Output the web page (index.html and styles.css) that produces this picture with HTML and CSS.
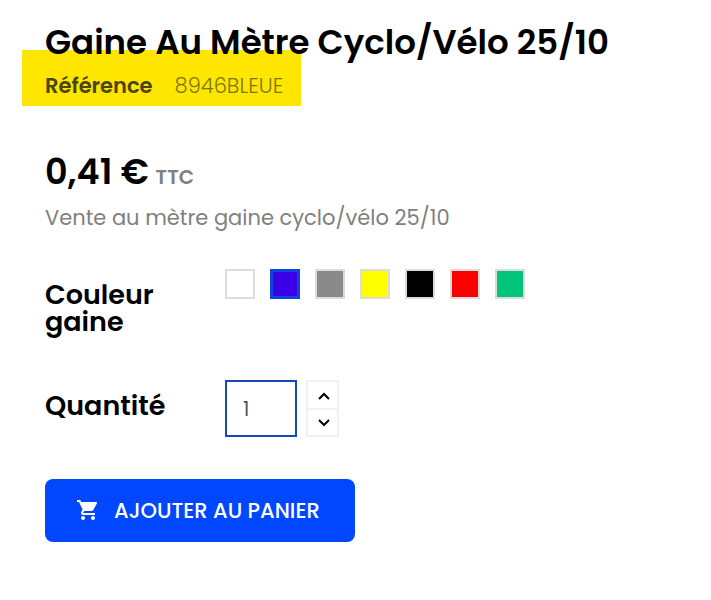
FILE: index.html
```html
<!DOCTYPE html>
<html lang="fr">
<head>
    <meta charset="UTF-8">
    <meta name="viewport" content="width=device-width, initial-scale=1.0">
    <title>Gaine Au Mètre Cyclo/Vélo 25/10</title>
    <link rel="stylesheet" href="styles.css">
</head>
<body>

    <main class="product">
        <h1 class="product-title">Gaine Au Mètre Cyclo/Vélo 25/10</h1>
        <p class="reference"><strong>Référence</strong><span>8946BLEUE</span></p>

        <p class="price"><span>0,41 €</span><small>TTC</small></p>
        <p class="description">Vente au mètre gaine cyclo/vélo 25/10</p>

        <form id="addToCart" method="post" autocomplete="off">
            <div class="row" role="radiogroup" aria-labelledby="colorLabel">
                <span class="row-label" id="colorLabel">Couleur gaine</span>
                <div class="swatches">
                    <input type="radio" name="color" class="swatch white" value="blanc" aria-label="Blanc">
                    <input type="radio" name="color" class="swatch blue" value="bleu" aria-label="Bleu" checked>
                    <input type="radio" name="color" class="swatch grey" value="gris" aria-label="Gris">
                    <input type="radio" name="color" class="swatch yellow" value="jaune" aria-label="Jaune">
                    <input type="radio" name="color" class="swatch black" value="noir" aria-label="Noir">
                    <input type="radio" name="color" class="swatch red" value="rouge" aria-label="Rouge">
                    <input type="radio" name="color" class="swatch green" value="vert" aria-label="Vert">
                </div>
            </div>

            <div class="row">
                <label class="row-label" for="qty">Quantité</label>
                <div class="quantity">
                    <input type="text" id="qty" name="qty" inputmode="numeric" value="1">
                    <div class="stepper">
                        <button type="button" aria-label="Augmenter">
                            <svg width="14" height="8" viewBox="0 0 14 8"><path d="M3 8L8 3L13 8"/></svg>
                        </button>
                        <button type="button" aria-label="Diminuer">
                            <svg width="14" height="8" viewBox="0 0 14 8"><path d="M3 2L8 7L13 2"/></svg>
                        </button>
                    </div>
                </div>
            </div>

            <button type="submit" class="add-to-cart">
                <svg width="24" height="24" viewBox="0 1 24 24" aria-hidden="true"><path d="M7 18c-1.100 0-1.990.9-1.990 2S5.900 22 7 22s2-.9 2-2-.9-2-2-2zM1 2v2h2l3.600 7.590-1.350 2.450c-.160.280-.250.610-.250.960 0 1.100.9 2 2 2h12v-2H7.420c-.140 0-.250-.110-.250-.250l.030-.120.900-1.630h7.450c.750 0 1.410-.410 1.750-1.030l3.580-6.490c.080-.140.120-.310.120-.480 0-.550-.450-1-1-1H5.210l-.940-2H1zm16 16c-1.100 0-1.990.9-1.990 2s.890 2 1.990 2 2-.9 2-2-.9-2-2-2z"/></svg>
                <span>AJOUTER AU PANIER</span>
            </button>
        </form>
    </main>

</body>
</html>
```

FILE: styles.css
```css
* {
    margin: 0;
    padding: 0;
    box-sizing: border-box;
    font-family: Poppins, Inter, "Liberation Sans", sans-serif;
}
body {
    background-color: #fff;
    color: #000;
    font-size: 21px;
}
.product {
    padding: 21px 45px;
}
.product-title {
    position: relative;
    z-index: 1;
    font-size: 34px;
    font-weight: 600;
    line-height: 42px;
}
.reference {
    display: flex;
    gap: 22px;
    width: fit-content;
    margin: -13px 0 0 -23px;
    padding: 24px 18px 8px 23px;
    background-color: #ffe600;
    color: #80750d;
    line-height: 24px;
}
.reference strong {
    color: #4a4508;
    font-weight: 600;
}
.reference span {
    font-weight: 300;
}
.price {
    display: flex;
    align-items: baseline;
    gap: 7px;
    margin-top: 46px;
    font-size: 35px;
    font-weight: 600;
    line-height: 40px;
}
.price small {
    color: #808080;
    font-size: 20px;
    line-height: 24px;
}
.description {
    margin-top: 14px;
    color: #808080;
    line-height: 24px;
}
.row {
    display: grid;
    grid-template-columns: 180px 1fr;
    margin-top: 39px;
}
.row + .row {
    margin-top: 45px;
}
.row-label {
    padding: 12px 24px 0 0;
    font-size: 27px;
    font-weight: 600;
    line-height: 27px;
}
.swatches {
    display: flex;
    flex-wrap: wrap;
    align-content: flex-start;
    gap: 15px;
}
.swatch {
    appearance: none;
    width: 30px;
    height: 30px;
    border: 2px solid #dcdcdc;
    cursor: pointer;
}
.swatch:checked {
    border: 3px solid #0f45dc;
}
.white { background-color: #fff; }
.blue { background-color: #3b00e6; }
.grey { background-color: #8a8a8a; }
.yellow { background-color: #ff0; }
.black { background-color: #000; }
.red { background-color: #f00; }
.green { background-color: #00c47a; }
.quantity {
    display: flex;
    gap: 9px;
    height: 57px;
}
.quantity input {
    width: 72px;
    padding: 0 16px;
    border: 2px solid #1549b5;
    outline: none;
    color: #555;
    font-size: 20px;
}
.stepper {
    display: flex;
    flex-direction: column;
    width: 33px;
    border: 2px solid #f1f1f1;
}
.stepper button {
    display: flex;
    flex: 1;
    justify-content: center;
    align-items: center;
    border: none;
    background-color: #fff;
    cursor: pointer;
}
.stepper button + button {
    border-top: 2px solid #f1f1f1;
}
.stepper svg {
    overflow: visible;
}
.stepper path {
    fill: none;
    stroke: #000;
    stroke-width: 2;
}
.add-to-cart {
    display: flex;
    align-items: center;
    gap: 14px;
    margin-top: 42px;
    padding: 19px 35px 19px 31px;
    border: none;
    border-radius: 8px;
    background-color: #0047ff;
    color: #fff;
    font-size: 21px;
    font-weight: 500;
    line-height: 25px;
    cursor: pointer;
}
.add-to-cart svg {
    fill: #fff;
}
```
